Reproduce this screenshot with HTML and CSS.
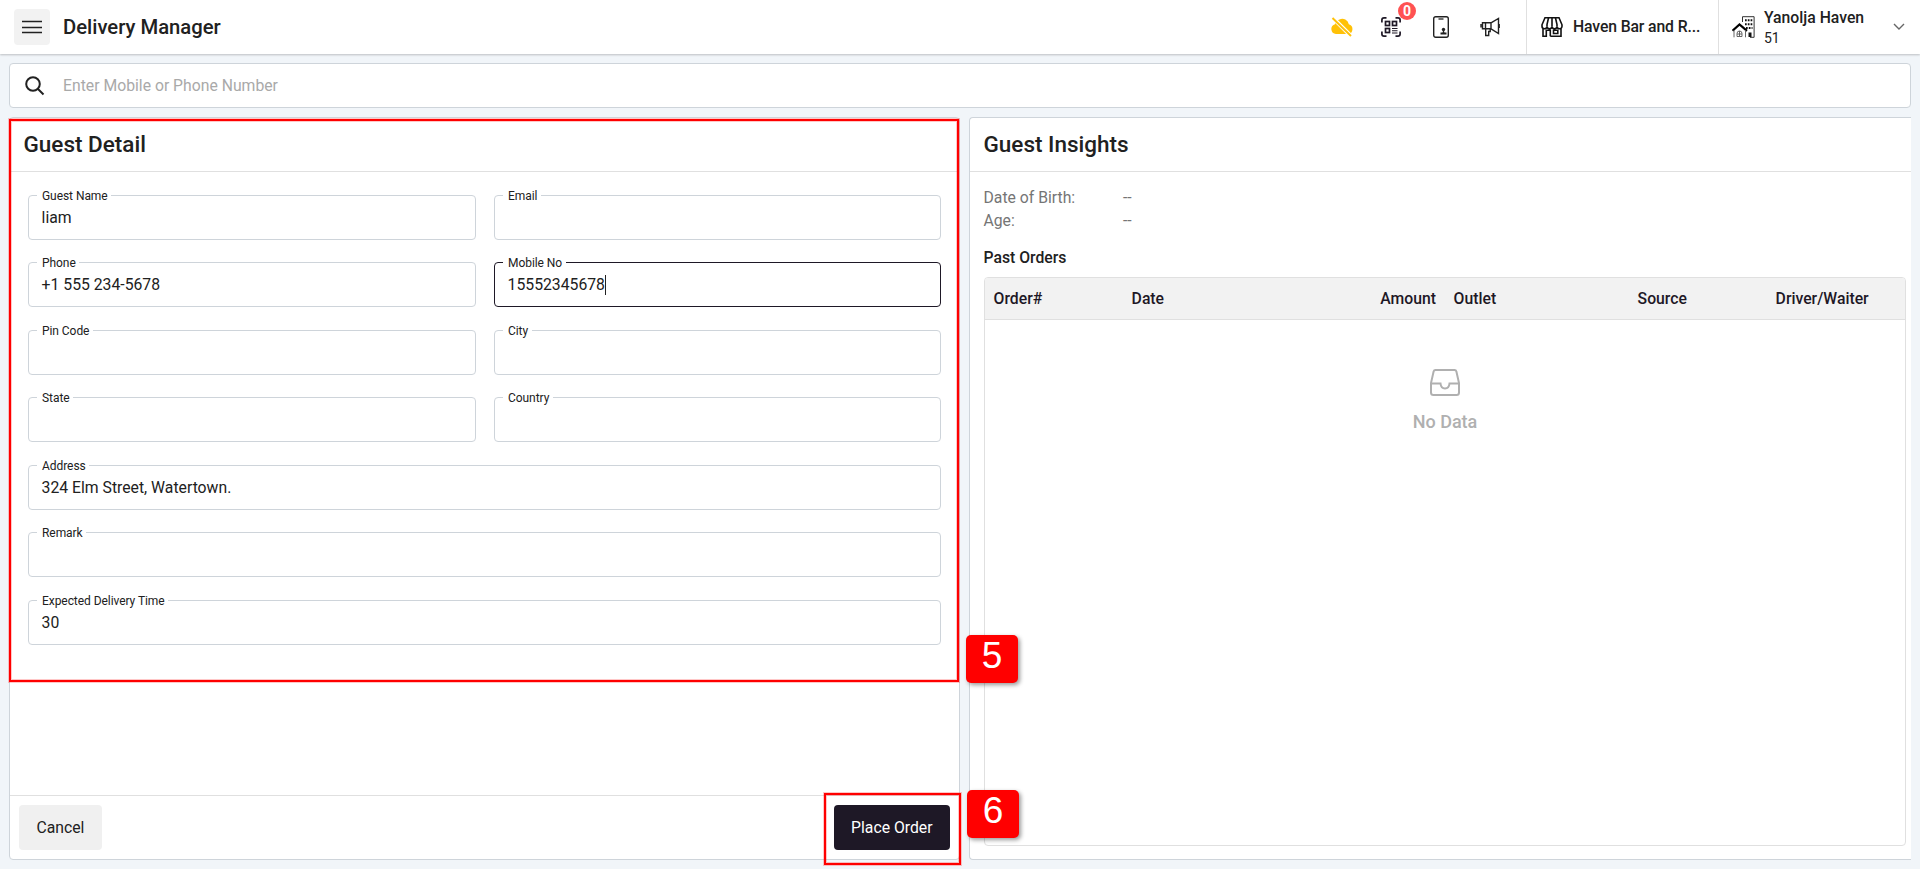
FILE: index.html
```html
<!DOCTYPE html>
<html lang="en">
<head>
<meta charset="utf-8">
<title>Delivery Manager</title>
<link rel="stylesheet" href="styles.css">
</head>
<body>
<header class="topbar">
  <button class="menu" aria-label="Menu"><svg width="20" height="14" viewBox="0 0 20 14" stroke="#212121" stroke-width="1.4"><path d="M0 1.500h20M0 7.500h20M0 12.500h20"/></svg></button>
  <h1 class="title">Delivery Manager</h1>
  <div class="tools">
    <svg width="24" height="20" viewBox="0 0 24 20"><path fill="#ffc107" d="M6 17a5 5 0 0 1-1-9.800A6 6 0 0 1 9.500 2.500a6.500 6.500 0 0 1 9.300 4.800A5 5 0 0 1 18.500 17z"/><path d="M2.500 .5 21 19" stroke="#fff" stroke-width="4"/><path d="M2.500 1 21 19" stroke="#ffc107" stroke-width="1.900"/></svg>
    <div class="qr">
      <svg width="20" height="20" viewBox="0 0 20 20" fill="none" stroke="#1e1826" stroke-width="1.700"><path d="M.9 5.500V3Q.9.900 3 .9h2.500M14.500.9H17q2.100 0 2.100 2.100v2.500M.9 14.500V17q0 2.100 2.100 2.100h2.500M14.500 19.100H17q2.100 0 2.100-2.100v-2.500"/><rect x="4.500" y="4.500" width="4" height="4"/><rect x="11.500" y="4.500" width="4" height="4"/><rect x="4.500" y="11.500" width="4" height="4"/><path stroke-width="1.100" d="M11 11.500h5.500M11 13.800h5.500M11 16h5.500"/></svg>
      <span class="count">0</span>
    </div>
    <svg class="phone" width="16" height="22" viewBox="0 0 16 22"><rect x=".7" y=".7" width="14.600" height="20.600" rx="2" fill="none" stroke="#212121" stroke-width="1.400"/><path d="M5.500 3h5" stroke="#212121" stroke-width="1.300"/><circle cx="10.500" cy="13.500" r="1.700" fill="#212121"/><path fill="#212121" d="M7.500 18.500v-2h2l.5-1.500h1l.5 1.500h2v2z"/></svg>
    <svg width="20" height="20" viewBox="0 0 20 20" fill="none" stroke="#212121" stroke-width="1.400"><path d="M2.500 5.800H11v6H2.500zM5.500 6v6M11 5.800 18.500 1.500v15L11 11.800zM19.200 7v4M5.700 12v6.500h3v-4h1.500v-2M1 7v3.500"/></svg>
  </div>
  <div class="outlet">
    <svg width="22" height="20" viewBox="0 0 22 20" fill="none" stroke="#111" stroke-width="1.600"><path d="M4 .8h14l3 7v1.500a2.500 2.500 0 0 1-5 0 2.500 2.500 0 0 1-5 0 2.500 2.500 0 0 1-5 0 2.500 2.500 0 0 1-5 0V7.800zM6 9V7.500L7.500 1M11 9V1M16 9V7.500L14.500 1M2 11v8.200h3.300v-6h4v6M2 19.200h3.300M9.300 19.200H20V11M12.500 13.200h4.300v3.300h-4.300z"/></svg>
    <span>Haven Bar and R...</span>
  </div>
  <div class="property">
    <svg width="23" height="22" viewBox="0 0 23 22"><path d="M10.500 6V.7h11.600v20.600H18" fill="none" stroke="#333" stroke-width="1"/><path d="M13 4.200h7.500M13 8.200h7.500M14 12h6.500" stroke="#111" stroke-width="2" stroke-dasharray="1.700 1.100"/><path d="M16.500 16.500h3V21h-3z" fill="#111"/><path d="M.5 14.800 7.500 8.500l7.500 6.300" fill="none" stroke="#000" stroke-width="2.200"/><path d="M2 14v7.300M13.500 14v7.300M5 19v-1.500a2.500 2.500 0 0 1 5 0V20.500H5zM7.500 15v5M5 18h5" fill="none" stroke="#555" stroke-width=".9"/></svg>
    <div class="names"><b>Yanolja Haven</b><span>51</span></div>
    <svg class="chev" width="12" height="8" viewBox="0 0 12 8" fill="none" stroke="#666" stroke-width="1.400"><path d="m1 1 5 5 5-5"/></svg>
  </div>
</header>
<main class="page">
  <div class="search">
    <svg width="20" height="20" viewBox="0 0 20 20" fill="none" stroke="#212121" stroke-width="2"><circle cx="8" cy="8" r="6.800"/><path d="m13 13 5.500 5.500"/></svg>
    <input class="query" placeholder="Enter Mobile or Phone Number">
  </div>
  <div class="columns">
    <section class="panel">
      <h2>Guest Detail</h2>
      <form class="form">
        <fieldset><legend>Guest Name</legend><span>liam</span></fieldset>
        <fieldset><legend>Email</legend></fieldset>
        <fieldset><legend>Phone</legend><span>+1 555 234-5678</span></fieldset>
        <fieldset class="focused"><legend>Mobile No</legend><span class="caret">15552345678</span></fieldset>
        <fieldset><legend>Pin Code</legend></fieldset>
        <fieldset><legend>City</legend></fieldset>
        <fieldset><legend>State</legend></fieldset>
        <fieldset><legend>Country</legend></fieldset>
        <fieldset class="wide"><legend>Address</legend><span>324 Elm Street, Watertown.</span></fieldset>
        <fieldset class="wide"><legend>Remark</legend></fieldset>
        <fieldset class="wide"><legend>Expected Delivery Time</legend><span>30</span></fieldset>
      </form>
      <footer class="actions">
        <button class="btn">Cancel</button>
        <button class="btn primary">Place Order</button>
      </footer>
    </section>
    <section class="panel insights">
      <h2>Guest Insights</h2>
      <dl class="facts"><dt>Date of Birth:</dt><dd>--</dd><dt>Age:</dt><dd>--</dd></dl>
      <h3>Past Orders</h3>
      <div class="orders">
        <div class="head"><span>Order#</span><span>Date</span><span class="num">Amount</span><span>Outlet</span><span>Source</span><span>Driver/Waiter</span></div>
        <div class="empty">
          <svg width="30" height="27" viewBox="0 0 30 27" fill="none" stroke="#b0b0b0" stroke-width="2"><path d="M5.500 1h19q1.500 0 1.900 1.500L29 14v9.500q0 2.500-2.500 2.500h-23Q1 26 1 23.500V14L3.600 2.500Q4 1 5.500 1z"/><path d="M1 14.500h9.500q.5 5 4.500 5t4.500-5H29"/></svg>
          <span>No Data</span>
        </div>
      </div>
    </section>
  </div>
</main>
<div class="mark mark-form"></div>
<div class="mark mark-submit"></div>
<div class="step step-5">5</div>
<div class="step step-6">6</div>
</body>
</html>
```
FILE: styles.css
```css
* { box-sizing: border-box; }
body { margin: 0; height: 869px; overflow: hidden; display: flex; flex-direction: column; background: #f1f5f9; color: #212121; font: 15.75px/20px Roboto, sans-serif; }
svg { display: block; flex: none; }
.topbar { height: 54px; flex: none; display: flex; align-items: center; background: #fff; padding-left: 14px; box-shadow: 0 1px 2px rgba(0,0,0,.22); }
.menu { width: 36px; height: 36px; border: 0; border-radius: 4px; background: #f2f2f2; display: grid; place-items: center; padding: 0; }
.title { margin: 0 0 0 13px; font-size: 20.25px; font-weight: 500; line-height: 24px; }
.tools { margin-left: auto; display: flex; align-items: center; gap: 30px; padding-right: 26px; }
.qr { position: relative; margin: 0 2px 0 -3px; }
.phone { margin-right: 1px; }
.count { position: absolute; left: 17px; top: -15px; width: 18px; height: 18px; border-radius: 9px; background: #ff5252; color: #fff; font-size: 14px; font-weight: 700; line-height: 18px; text-align: center; }
.outlet { width: 192px; height: 54px; border-left: 1px solid #e0e0e0; padding-left: 14px; display: flex; align-items: center; gap: 10px; font-weight: 500; letter-spacing: -.12px; white-space: nowrap; }
.property { width: 202px; height: 54px; border-left: 1px solid #e0e0e0; padding: 0 15px 0 13px; display: flex; align-items: center; gap: 9px; }
.names { display: flex; flex-direction: column; padding-top: 2px; }
.names b { font-weight: 500; }
.names span { font-size: 14px; line-height: 21px; }
.chev { margin-left: auto; }
.page { flex: 1; padding: 9px 9px; display: flex; flex-direction: column; gap: 9px; }
.search { height: 45px; flex: none; border: 1px solid #ced4da; border-radius: 4px; background: #fff; display: flex; align-items: center; padding-left: 15px; gap: 18px; }
.query { flex: 1; border: 0; outline: 0; padding: 0; font: inherit; }
.query::placeholder { color: #a9a9a9; }
.columns { flex: 1; display: grid; grid-template-columns: 951px 942px; gap: 9px; }
.panel { border: 1px solid #ced4da; border-radius: 4px; background: #fff; display: flex; flex-direction: column; }
.insights { border-right: 0; border-radius: 4px 0 0 4px; }
h2 { margin: 0; height: 54px; padding: 0 13.5px; border-bottom: 1px solid #e0e0e0; font-size: 22.5px; font-weight: 500; line-height: 52.4px; }
.form { flex: 1; padding: 16.8px 18px 0; display: grid; grid-template-columns: 448px 447px; column-gap: 18px; grid-auto-rows: 67.5px; align-content: start; }
fieldset { margin: 0; height: 51px; border: 1px solid #ced4da; border-radius: 4px; padding: 0 12.6px; min-width: 0; }
fieldset.wide { grid-column: span 2; }
legend { margin-left: -4.6px; padding: 1px 3.5px 0 5px; font-size: 12px; line-height: 12px; letter-spacing: -.06px; }
fieldset span { display: block; line-height: 20px; margin-top: 6px; }
.focused { border-color: #1e1826; }
.focused .caret { width: max-content; border-right: 1px solid #212121; }
.actions { height: 64px; border-top: 1px solid #e0e0e0; padding: 9px; display: flex; justify-content: space-between; }
.btn { height: 45px; border: 0; border-radius: 4px; padding: 0 17.5px; background: #f0f0f0; color: #212121; font: 15.75px Roboto, sans-serif; }
.primary { background: #1e1826; color: #fff; }
.facts { margin: 14px 13.5px 0; display: grid; grid-template-columns: 139.5px 1fr; line-height: 23px; color: #757575; }
.facts dd { margin: 0; }
h3 { margin: 15px 13.5px 9px; font-size: 15.75px; font-weight: 500; line-height: 21px; }
.orders { flex: 1; margin: 0 5px 13px 14px; border: 1px solid #e0e0e0; border-radius: 4px; overflow: hidden; }
.head { height: 42px; display: grid; grid-template-columns: 15fr 20fr 15fr 20fr 15fr 15fr; align-items: center; background: #f2f2f2; border-bottom: 1px solid #e0e0e0; font-weight: 500; color: #1e1826; }
.head span { padding: 0 9px 0 8.6px; }
.num { text-align: right; }
.empty { padding-top: 49px; display: flex; flex-direction: column; align-items: center; gap: 16px; color: #b0b0b0; font-size: 18px; font-weight: 500; }
/* tutorial callouts drawn over the page */
.mark { position: absolute; border: 2px solid #f00; box-shadow: 0 0 0 1px rgba(255,0,0,.22), inset 0 0 0 1px rgba(255,0,0,.22); }
.mark-form { left: 9px; top: 119px; width: 950px; height: 563px; }
.mark-submit { left: 824px; top: 793px; width: 137px; height: 72px; }
.step { position: absolute; width: 52px; height: 48px; border-radius: 5px; background: #f00; color: #fff; font: 37px/42px "Liberation Sans", sans-serif; text-align: center; box-shadow: 2px 2px 4px rgba(0,0,0,.4); }
.step-5 { left: 966px; top: 635px; }
.step-6 { left: 967px; top: 790px; }
```
